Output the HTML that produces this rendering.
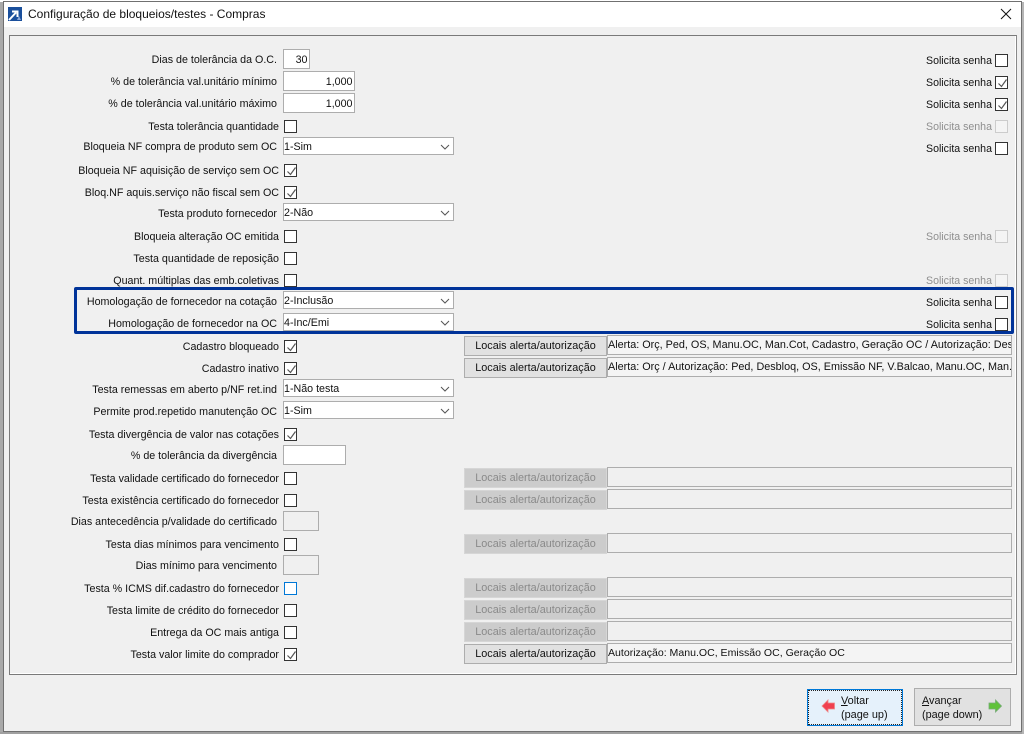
<!DOCTYPE html>
<html><head><meta charset="utf-8"><style>
html,body{margin:0;padding:0;background:#fff}
body{width:1024px;height:734px;position:relative;overflow:hidden;font:10.7px "Liberation Sans",sans-serif;color:#111}
div,svg{position:absolute;box-sizing:border-box}
.l{right:745px;height:14px;line-height:14px;white-space:nowrap;text-align:right;margin-top:1px}
.li{right:747px}
.s{left:926px;height:14px;line-height:14px;white-space:nowrap;margin-top:1px;font-size:10.6px}
.g{color:#8f8f8f}
.c{left:284px;width:13px;height:13px;border:1px solid #333;background:#fff}
.c svg{left:1px;top:1px}
.r{left:995px}
.d{border-color:#ccc;background:#f4f4f4}
.i{left:283px;height:20px;border:1px solid #adadad;background:#fff;text-align:right;padding-right:1.5px;line-height:20px}
.o{background:#f0f0f0}
.se{left:283px;width:171px;height:18px;border:1px solid #adadad;background:#fff;line-height:18px;padding-left:0}
.se svg{right:3px;top:6px}
.b{left:464px;width:143px;height:20px;border:1px solid #adadad;background:#e1e1e1;text-align:center;line-height:19px;font-size:10.85px}
.bd{background:#ccc;border-color:#d6d6d6;color:#8a8a8a}
.f{left:607px;width:405px;height:20px;border:1px solid #adadad;overflow:hidden;white-space:nowrap;line-height:18px;padding-left:0;font-size:10.82px}
.n2{background:#f4f4f4}
</style></head><body>
<div style="left:0;top:0;width:1024px;height:734px;background:#fff"></div>
<div style="left:0;top:2px;width:3px;height:732px;background:#a9a9a9"></div>
<div style="left:3px;top:1px;width:1019px;height:731px;border:1px solid #707070;background:#f0f0f0"></div>
<div style="left:0;top:732px;width:1024px;height:2px;background:#a0a0a0"></div>
<div style="left:1022px;top:2px;width:2px;height:732px;background:#b5b5b5"></div>
<div style="left:4px;top:2px;width:1017px;height:25px;background:#fff"></div>
<svg style="left:8px;top:7px" width="14" height="14" viewBox="0 0 14 14"><rect width="14" height="14" fill="#1a4f9c"/><path d="M1 13L8 5.5M4 4.5H9.5V10" stroke="#fff" stroke-width="2" fill="none"/><path d="M9 13l2-4 2 4z" fill="#8aa7d6"/></svg>
<div style="left:28px;top:7px;font-size:12px;line-height:15px;white-space:nowrap">Configuração de bloqueios/testes - Compras</div>
<svg style="left:1000px;top:8px" width="12" height="12" viewBox="0 0 12 12"><path d="M1 1L11 11M11 1L1 11" stroke="#111" stroke-width="1" fill="none"/></svg>
<div style="left:9px;top:35px;width:1008px;height:640px;border:1px solid #7a7a7a;border-right-color:#888;box-shadow:inset -1px -1px 0 #fff;background:#f0f0f0"></div>

<div class="l li" style="top:52px">Dias de tolerância da O.C.</div>
<div class="i" style="top:49px;width:27px">30</div>
<div class="l li" style="top:74px">% de tolerância val.unitário mínimo</div>
<div class="i" style="top:71px;width:72px">1,000</div>
<div class="l li" style="top:96px">% de tolerância val.unitário máximo</div>
<div class="i" style="top:93px;width:72px">1,000</div>
<div class="l" style="top:119px">Testa tolerância quantidade</div>
<div class="c" style="top:120px"></div>
<div class="l li" style="top:139px">Bloqueia NF compra de produto sem OC</div>
<div class="se" style="top:137px">1-Sim<svg width="10" height="6"><path d="M1 1l4 4 4-4" stroke="#555" fill="none"/></svg></div>
<div class="l" style="top:163px">Bloqueia NF aquisição de serviço sem OC</div>
<div class="c" style="top:164px"><svg width="11" height="11"><path d="M1.5 5.5l3 3 5-7" stroke="#555" stroke-width="1.2" fill="none"/></svg></div>
<div class="l" style="top:185px">Bloq.NF aquis.serviço não fiscal sem OC</div>
<div class="c" style="top:186px"><svg width="11" height="11"><path d="M1.5 5.5l3 3 5-7" stroke="#555" stroke-width="1.2" fill="none"/></svg></div>
<div class="l li" style="top:206px">Testa produto fornecedor</div>
<div class="se" style="top:203px">2-Não<svg width="10" height="6"><path d="M1 1l4 4 4-4" stroke="#555" fill="none"/></svg></div>
<div class="l" style="top:229px">Bloqueia alteração OC emitida</div>
<div class="c" style="top:230px"></div>
<div class="l" style="top:251px">Testa quantidade de reposição</div>
<div class="c" style="top:252px"></div>
<div class="l" style="top:273px">Quant. múltiplas das emb.coletivas</div>
<div class="c" style="top:274px"></div>
<div class="l li" style="top:294px">Homologação de fornecedor na cotação</div>
<div class="se" style="top:291px">2-Inclusão<svg width="10" height="6"><path d="M1 1l4 4 4-4" stroke="#555" fill="none"/></svg></div>
<div class="l li" style="top:316px">Homologação de fornecedor na OC</div>
<div class="se" style="top:313px">4-Inc/Emi<svg width="10" height="6"><path d="M1 1l4 4 4-4" stroke="#555" fill="none"/></svg></div>
<div class="l" style="top:339px">Cadastro bloqueado</div>
<div class="c" style="top:340px"><svg width="11" height="11"><path d="M1.5 5.5l3 3 5-7" stroke="#555" stroke-width="1.2" fill="none"/></svg></div>
<div class="l" style="top:361px">Cadastro inativo</div>
<div class="c" style="top:362px"><svg width="11" height="11"><path d="M1.5 5.5l3 3 5-7" stroke="#555" stroke-width="1.2" fill="none"/></svg></div>
<div class="l li" style="top:382px">Testa remessas em aberto p/NF ret.ind</div>
<div class="se" style="top:379px">1-Não testa<svg width="10" height="6"><path d="M1 1l4 4 4-4" stroke="#555" fill="none"/></svg></div>
<div class="l li" style="top:404px">Permite prod.repetido manutenção OC</div>
<div class="se" style="top:401px">1-Sim<svg width="10" height="6"><path d="M1 1l4 4 4-4" stroke="#555" fill="none"/></svg></div>
<div class="l" style="top:427px">Testa divergência de valor nas cotações</div>
<div class="c" style="top:428px"><svg width="11" height="11"><path d="M1.5 5.5l3 3 5-7" stroke="#555" stroke-width="1.2" fill="none"/></svg></div>
<div class="l li" style="top:448px">% de tolerância da divergência</div>
<div class="i" style="top:445px;width:63px"></div>
<div class="l" style="top:471px">Testa validade certificado do fornecedor</div>
<div class="c" style="top:472px"></div>
<div class="l" style="top:493px">Testa existência certificado do fornecedor</div>
<div class="c" style="top:494px"></div>
<div class="l li" style="top:514px">Dias antecedência p/validade do certificado</div>
<div class="i o" style="top:511px;width:36px"></div>
<div class="l" style="top:537px">Testa dias mínimos para vencimento</div>
<div class="c" style="top:538px"></div>
<div class="l li" style="top:558px">Dias mínimo para vencimento</div>
<div class="i o" style="top:555px;width:36px"></div>
<div class="l" style="top:581px">Testa % ICMS dif.cadastro do fornecedor</div>
<div class="c" style="top:582px;border-color:#0078d7"></div>
<div class="l" style="top:603px">Testa limite de crédito do fornecedor</div>
<div class="c" style="top:604px"></div>
<div class="l" style="top:625px">Entrega da OC mais antiga</div>
<div class="c" style="top:626px"></div>
<div class="l" style="top:647px">Testa valor limite do comprador</div>
<div class="c" style="top:648px"><svg width="11" height="11"><path d="M1.5 5.5l3 3 5-7" stroke="#555" stroke-width="1.2" fill="none"/></svg></div>

<div class="s" style="top:53px">Solicita senha</div><div class="c r" style="top:54px"></div>
<div class="s" style="top:75px">Solicita senha</div><div class="c r" style="top:76px"><svg width="11" height="11"><path d="M1.5 5.5l3 3 5-7" stroke="#555" stroke-width="1.2" fill="none"/></svg></div>
<div class="s" style="top:97px">Solicita senha</div><div class="c r" style="top:98px"><svg width="11" height="11"><path d="M1.5 5.5l3 3 5-7" stroke="#555" stroke-width="1.2" fill="none"/></svg></div>
<div class="s g" style="top:119px">Solicita senha</div><div class="c r d" style="top:120px"></div>
<div class="s" style="top:141px">Solicita senha</div><div class="c r" style="top:142px"></div>
<div class="s g" style="top:229px">Solicita senha</div><div class="c r d" style="top:230px"></div>
<div class="s g" style="top:273px">Solicita senha</div><div class="c r d" style="top:274px"></div>
<div class="s" style="top:295px">Solicita senha</div><div class="c r" style="top:296px"></div>
<div class="s" style="top:317px">Solicita senha</div><div class="c r" style="top:318px"></div>

<div style="left:74px;top:287px;width:940px;height:47px;border:3px solid #003399;border-radius:2px"></div>

<div class="b" style="top:336px">Locais alerta/autorização</div>
<div class="f n2" style="top:335px">Alerta: Orç, Ped, OS, Manu.OC, Man.Cot, Cadastro, Geração OC / Autorização: Desbloq, Ped</div>
<div class="b" style="top:358px">Locais alerta/autorização</div>
<div class="f n2" style="top:357px">Alerta: Orç / Autorização: Ped, Desbloq, OS, Emissão NF, V.Balcao, Manu.OC, Man.Cot</div>
<div class="b bd" style="top:468px">Locais alerta/autorização</div><div class="f" style="top:467px"></div>
<div class="b bd" style="top:490px">Locais alerta/autorização</div><div class="f" style="top:489px"></div>
<div class="b bd" style="top:534px">Locais alerta/autorização</div><div class="f" style="top:533px"></div>
<div class="b bd" style="top:578px">Locais alerta/autorização</div><div class="f" style="top:577px"></div>
<div class="b bd" style="top:600px">Locais alerta/autorização</div><div class="f" style="top:599px"></div>
<div class="b bd" style="top:622px">Locais alerta/autorização</div><div class="f" style="top:621px"></div>
<div class="b" style="top:644px">Locais alerta/autorização</div>
<div class="f n2" style="top:643px;font-size:10.55px">Autorização: Manu.OC, Emissão OC, Geração OC</div>

<div style="left:807px;top:689px;width:96px;height:37px;border:1px solid #0078d7;background:#e5f1fb"></div>
<div style="left:808px;top:690px;width:94px;height:35px;border:1px dotted #222"></div>
<svg style="left:821px;top:699px" width="14" height="14" viewBox="0 0 14 14"><path d="M1 7L7 1V4H13.5V10H7V13z" fill="#f0404f" stroke="#e88" stroke-width=".8"/></svg>
<div style="left:841px;top:694px;line-height:14px;white-space:nowrap;font-size:10.9px"><span style="text-decoration:underline">V</span>oltar<br>(page up)</div>
<div style="left:914px;top:688px;width:97px;height:38px;border:1px solid #adadad;background:#e1e1e1"></div>
<svg style="left:988px;top:699px" width="14" height="14" viewBox="0 0 14 14"><path d="M13.5 7L7.5 1V4H1V10H7.5V13z" fill="#5fc23a" stroke="#7a7" stroke-width=".8"/></svg>
<div style="left:922px;top:694px;line-height:14px;white-space:nowrap;font-size:10.85px"><span style="text-decoration:underline">A</span>vançar<br>(page down)</div>
</body></html>
